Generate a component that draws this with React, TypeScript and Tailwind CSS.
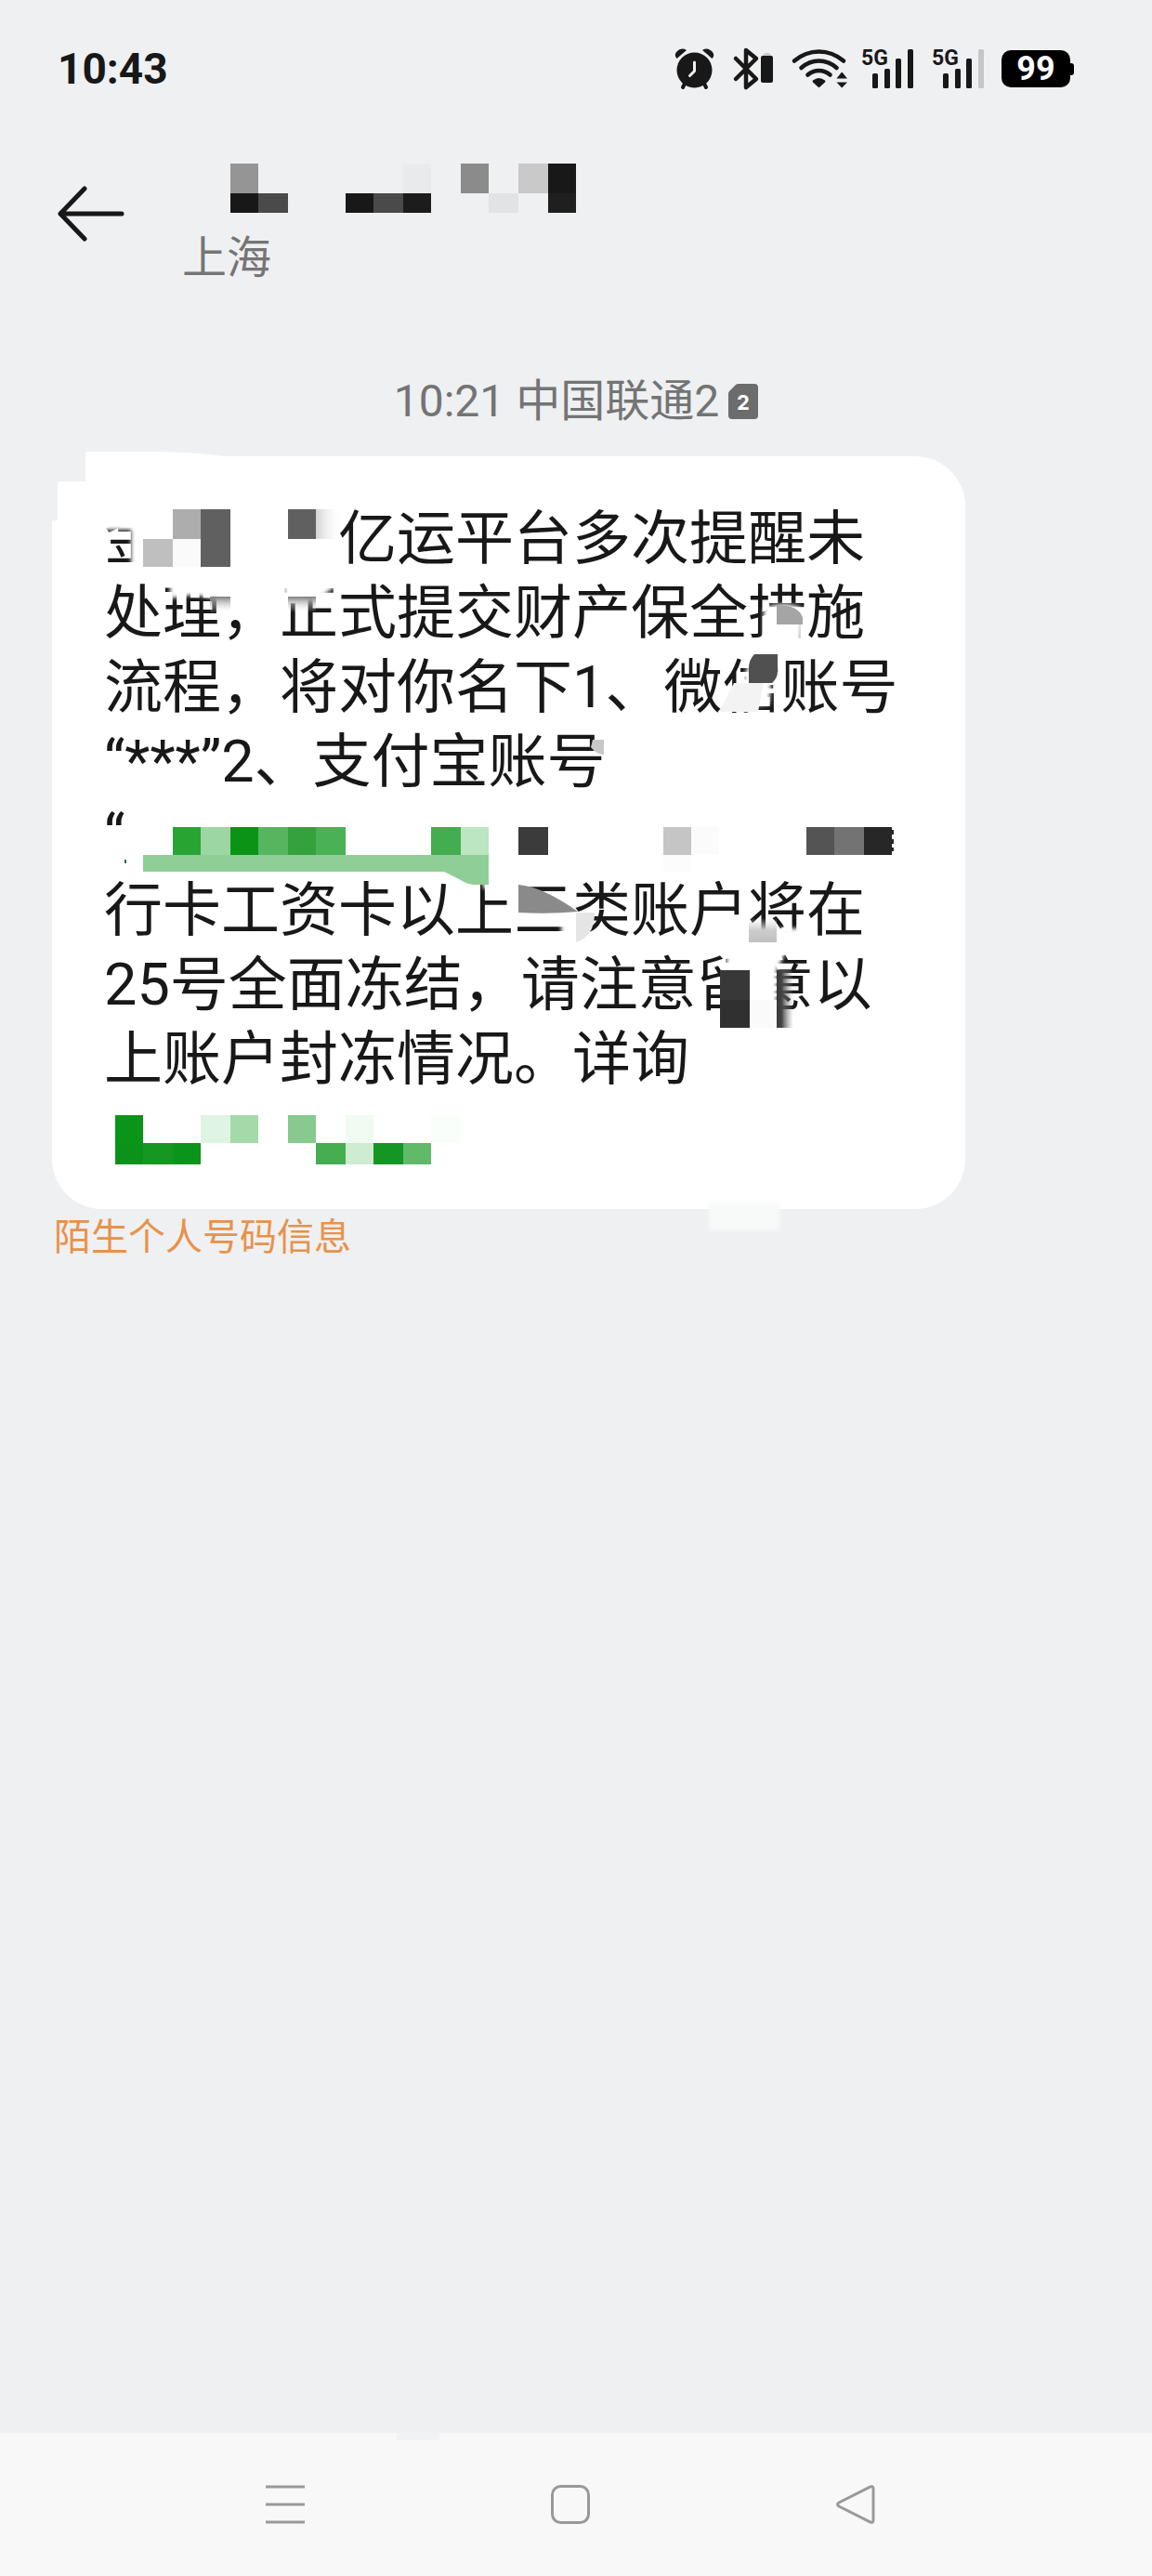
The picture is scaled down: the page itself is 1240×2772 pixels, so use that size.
import type { ReactNode } from "react";

type Block = [x: number, y: number, w: number, h: number, fill: string];

const Blocks = ({ blocks }: { blocks: Block[] }) => (
  <>
    {blocks.map(([x, y, w, h, fill]) => (
      <rect
        key={`${x}-${y}`}
        x={x}
        y={y}
        width={w}
        height={h}
        fill={fill}
        shapeRendering="crispEdges"
      />
    ))}
  </>
);

// x and y are relative to the left edge of the contact column
const senderBlocks: Block[] = [
  [52, 0, 30, 32, "#959595"],
  [52, 32, 30, 21, "#181818"],
  [82, 32, 32, 21, "#4a4a4a"],
  [176, 32, 30, 21, "#181818"],
  [206, 32, 32, 21, "#4a4a4a"],
  [238, 0, 30, 32, "#e9eaeb"],
  [238, 32, 30, 21, "#1c1c1c"],
  [300, 0, 30, 32, "#8b8b8b"],
  [330, 32, 32, 21, "#e2e3e4"],
  [362, 0, 32, 32, "#c9c9ca"],
  [394, 0, 30, 32, "#181818"],
  [394, 32, 30, 21, "#1f1f1f"],
];

const messageLines = [
  "金\u3000\u3000\u3000亿运平台多次提醒未",
  "处理，正式提交财产保全措施",
  "流程，将对你名下1、微信账号",
  "“***”2、支付宝账号",
  "“",
  "行卡工资卡以上三类账户将在",
  "25号全面冻结，请注意留意以",
  "上账户封冻情况。详询",
  "\u00a0",
];

const messageBlocks: Block[] = [
  [154, 580, 32, 30, "#bfbfbf"],
  [186, 548, 30, 32, "#adadad"],
  [186, 580, 30, 30, "#fafafa"],
  [216, 548, 32, 62, "#606060"],
  [310, 548, 30, 32, "#606060"],

  [186, 890, 30, 30, "#27a432"],
  [216, 890, 32, 30, "#9cd6a3"],
  [248, 890, 30, 30, "#0a9415"],
  [278, 890, 32, 30, "#57b560"],
  [310, 890, 30, 30, "#33a23d"],
  [340, 890, 32, 30, "#4bb156"],
  [464, 890, 32, 30, "#43ad4f"],
  [496, 890, 30, 30, "#bce5c1"],
  [134, 925, 2, 4, "#2f6b4a"],
  [558, 890, 32, 30, "#3b3b3b"],
  [714, 890, 30, 30, "#c5c5c5"],
  [744, 890, 30, 30, "#fbfbfb"],
  [714, 920, 30, 18, "#fcfcfc"],
  [868, 890, 30, 30, "#545454"],
  [898, 890, 32, 30, "#737373"],
  [930, 890, 30, 30, "#272727"],
  [960, 893, 2, 5, "#272727"],
  [960, 903, 2, 5, "#272727"],
  [960, 912, 2, 4, "#272727"],

  [775, 1044, 32, 32, "#383838"],
  [775, 1076, 32, 30, "#303030"],
  [807, 1076, 29, 30, "#fafafa"],

  [124, 1200, 30, 30, "#0a9418"],
  [124, 1230, 30, 23, "#0c921a"],
  [154, 1230, 32, 23, "#169722"],
  [186, 1230, 30, 23, "#0a941a"],
  [216, 1200, 32, 30, "#e0f4e3"],
  [248, 1200, 30, 30, "#a4d9a9"],
  [310, 1200, 30, 30, "#87c98e"],
  [340, 1230, 32, 23, "#46ad50"],
  [372, 1200, 30, 30, "#f0fbf2"],
  [372, 1230, 30, 23, "#cdecd1"],
  [402, 1230, 32, 23, "#139722"],
  [434, 1230, 30, 23, "#61b96a"],
  [464, 1200, 32, 30, "#fafefa"],
];

export default function App() {
  return (
    <div className="flex min-h-screen flex-col bg-[#eff0f2] font-[Roboto,'Noto_Sans_CJK_SC',sans-serif] text-[#181818]">
      <StatusBar />
      <Header />
      <main className="flex-1 px-14">
        <div className="mt-[98px] flex items-center justify-center gap-2.5 text-[48px] leading-[56px] text-[#737474]">
          <span>10:21 中国联通2</span>
          <SimBadge />
        </div>
        <Message />
        <p className="px-0.5 pt-[3px] text-[40px] leading-[56px] text-[#e8924a]">
          陌生个人号码信息
        </p>
      </main>
      <NavigationBar />
    </div>
  );
}

const StatusBar = () => (
  <div className="flex h-[148px] items-center justify-between pr-[84px] pl-[62px]">
    <span className="text-[46px] leading-none font-bold">10:43</span>
    <div className="flex items-center gap-4">
      <AlarmIcon />
      <BluetoothIcon />
      <WifiIcon />
      <SignalIcon />
      <SignalIcon weak />
      <div className="flex items-center">
        <span className="flex h-10 w-[74px] items-center justify-center rounded-[10px] bg-black text-[36px] leading-none font-bold text-white">
          99
        </span>
        <span className="h-[13px] w-1 rounded-r-[3px] bg-black" />
      </div>
    </div>
  </div>
);

const Header = () => (
  <header className="flex px-14 pt-7">
    <button
      type="button"
      aria-label="返回"
      className="flex h-[108px] w-[140px] items-center pl-1.5"
    >
      <svg
        width="72"
        height="60"
        viewBox="0 0 72 60"
        fill="none"
        stroke="currentColor"
        strokeWidth="5"
        strokeLinecap="round"
        strokeLinejoin="round"
      >
        <path d="M29 3 3 30l26 27M3 30h66" />
      </svg>
    </button>
    <div>
      <svg width="424" height="74" viewBox="0 0 424 74">
        <Blocks blocks={senderBlocks} />
      </svg>
      <p className="text-[48px] leading-[56px] text-[#757575]">上海</p>
    </div>
  </header>
);

const Message = () => (
  <article className="relative mt-[31px] max-w-[983px] rounded-[54px] bg-white px-14 pt-[49px] pb-[41px]">
    <p className="text-[63px] leading-[80px]">
      {messageLines.map((line) => (
        <span key={line} className="block whitespace-nowrap">
          {line}
        </span>
      ))}
    </p>
    <MessageMarks />
  </article>
);

const MessageMarks = () => (
  <svg
    className="pointer-events-none absolute top-0 left-0 overflow-visible"
    width="983"
    height="810"
    viewBox="56 491 983 810"
  >
    <defs>
      <linearGradient id="fadeRight">
        <stop stopColor="#d2d2d2" />
        <stop offset="1" stopColor="#fff" stopOpacity="0" />
      </linearGradient>
      <linearGradient id="fadeDark">
        <stop stopColor="#383838" />
        <stop offset="0.3" stopColor="#444" />
        <stop offset="1" stopColor="#999" stopOpacity="0" />
      </linearGradient>
      <linearGradient id="fadeDown" x2="0" y2="1">
        <stop stopColor="#7c7c7c" />
        <stop offset="1" stopColor="#fff" stopOpacity="0" />
      </linearGradient>
      <linearGradient id="fadeUp" x2="0" y2="1">
        <stop stopColor="#ddd" stopOpacity="0" />
        <stop offset="0.5" stopColor="#cdcdcd" />
        <stop offset="1" stopColor="#c0c0c0" />
      </linearGradient>
      <filter id="soft" x="-20%" y="-40%" width="140%" height="180%">
        <feGaussianBlur stdDeviation="2" />
      </filter>
    </defs>

    {/* stepped top left corner */}
    <path d="M54 489h38v29H62v42h-8z" fill="#eff0f2" />
    <path d="M92 486h80q40 1 70 5v27H92z" fill="#fff" />

    {/* wiped parts of the characters */}
    <g fill="#fff" filter="url(#soft)">
      <path d="M106 540h76v78h-41v-48h-35z" />
      <path d="M183 622h70v14l-14 10-30-6-26 4z" />
      <path d="M306 622h30l24 10-20 14h-34z" />
      <path d="M822 655q22-10 42 0l-2 36h-40z" />
      <path d="M790 762l18-54h24l-4 50z" />
      <path d="M520 932h20v24h-20zM558 962h36l28 22v8h-64zM604 992h22v16h-22z" />
      <path d="M838 999h26v18h-30z" />
      <path d="M784 1024h62l-10 20v56h-56v-56z" />
    </g>

    <Blocks blocks={messageBlocks} />

    <rect x="340" y="548" width="28" height="32" fill="url(#fadeRight)" />
    <rect x="226" y="642" width="22" height="18" fill="url(#fadeDown)" />
    <rect x="310" y="642" width="30" height="17" fill="url(#fadeDown)" />
    <path d="M836 651q24 0 28 14v7h-28z" fill="#a5a5a5" />
    <path d="M812 704h25v18q0 8-6 13h-25v-16q0-9 6-15z" fill="#505050" />
    <path d="M790 735h32l-6 31h-42z" fill="#f3f3f3" />
    <path d="M638 796h12v16q-8 0-14-8z" fill="#c8c8c8" />

    <path d="M154 920h372v32h-14q-9 0-16-5l-18-9H154z" fill="#90ce98" />
    <path d="M558 952q26 2 64 29-32 3-64 1z" fill="#8a8a8a" />
    <path d="M620 982h20q0 26-20 32z" fill="#e5e5e5" />
    <rect x="806" y="988" width="30" height="26" fill="url(#fadeUp)" />
    <rect x="836" y="1044" width="18" height="62" fill="url(#fadeDark)" />

    <rect
      x="763"
      y="1294"
      width="76"
      height="30"
      fill="#f8f9f9"
      filter="url(#soft)"
    />
  </svg>
);

const SimBadge = () => (
  <svg width="32" height="38" viewBox="0 0 32 38">
    <path
      d="M11 0h17a4 4 0 0 1 4 4v30a4 4 0 0 1-4 4H4a4 4 0 0 1-4-4V11q0-2 1-3L8 1q1-1 3-1z"
      fill="#6b6c6b"
    />
    <text
      x="16"
      y="28"
      textAnchor="middle"
      fill="#fff"
      className="font-[Inter,sans-serif] text-[22px] font-bold"
    >
      2
    </text>
  </svg>
);

const AlarmIcon = () => (
  <svg width="48" height="48" viewBox="0 0 48 48" fill="currentColor">
    <circle cx="25.5" cy="25.5" r="19" />
    <path d="M6.5 13Q3 9 6.5 5.500Q11 .5 17 4z" />
    <path d="M44.500 13Q48 9 44.500 5.500Q40 .5 34 4z" />
    <path
      d="m15 40-2 4M36 40l2 4"
      stroke="currentColor"
      strokeWidth="4"
      strokeLinecap="round"
    />
    <path
      d="M25.500 17v9.500l-5 5"
      fill="none"
      stroke="#eff0f2"
      strokeWidth="3"
      strokeLinecap="round"
      strokeLinejoin="round"
    />
  </svg>
);

const BluetoothIcon = () => (
  <svg width="46" height="48" viewBox="0 0 46 48" fill="none">
    <path
      d="m6 13 22 22-11 9V4l11 9L6 35"
      stroke="currentColor"
      strokeWidth="4.500"
      strokeLinecap="round"
      strokeLinejoin="round"
    />
    <path d="M35 10q0-3 4.500-3t4.500 3z" fill="#c9cacb" />
    <rect x="33" y="10" width="13" height="29" rx="2" fill="currentColor" />
  </svg>
);

const WifiIcon = () => (
  <svg
    className="overflow-visible"
    width="62"
    height="48"
    viewBox="0 0 62 48"
    fill="none"
  >
    <path
      d="M7 15.500Q19 5.500 33.500 5.500T60 15.500M14.500 23Q23 15.500 33.500 15.500T52.500 23M21.500 30.500Q27 26 33.500 26T45.500 30.500"
      stroke="currentColor"
      strokeWidth="4.600"
      strokeLinecap="round"
    />
    <path
      d="M27 36.500q6.500-5 13 0 1 1 0 2l-5.500 5q-1 1-2 0l-5.500-5q-1-1 0-2zM52.500 34.500h11.500l-5-6.200q-.8-1-1.600 0zM52.500 38.500h11.500l-5 5.200q-.8 1-1.600 0z"
      fill="currentColor"
    />
  </svg>
);

const SignalIcon = ({ weak = false }: { weak?: boolean }) => (
  <svg
    className="overflow-visible"
    width="60"
    height="48"
    viewBox="0 0 60 48"
    fill="currentColor"
  >
    <text
      x="1"
      y="20"
      className="font-['Liberation_Sans_Narrow',Roboto,sans-serif] text-[23px] font-bold"
    >
      5G
    </text>
    <rect x="13" y="29" width="6" height="16" rx="1.500" />
    <rect x="26" y="24" width="6" height="21" rx="1.500" />
    <rect x="38" y="13" width="6" height="32" rx="1.500" />
    <rect
      x="51"
      y="3"
      width="6"
      height="42"
      rx="1.500"
      fill={weak ? "#c5c6c6" : "currentColor"}
    />
  </svg>
);

const NavButton = ({
  label,
  children,
}: {
  label: string;
  children: ReactNode;
}) => (
  <button
    type="button"
    aria-label={label}
    className="flex h-full flex-1 items-center justify-center"
  >
    <svg
      width="42"
      height="42"
      viewBox="0 0 42 42"
      fill="none"
      stroke="#999"
      strokeWidth="3"
      strokeLinejoin="round"
    >
      {children}
    </svg>
  </button>
);

const NavigationBar = () => (
  <nav className="relative flex h-[154px] bg-[#f8f8f8] pr-[166px] pl-[154px]">
    <span className="absolute top-0 left-[427px] h-2 w-[46px] bg-[#f1f2f4]" />
    <NavButton label="最近任务">
      <path d="M0 2h42M0 21h42M0 40h42" />
    </NavButton>
    <NavButton label="主屏幕">
      <rect x="1.500" y="1.500" width="39" height="39" rx="9" />
    </NavButton>
    <NavButton label="返回">
      <path d="M36.500 2.200Q40 .5 40 4v34q0 3.500-3.500 1.800L3 23q-3-2 0-4z" />
    </NavButton>
  </nav>
);
